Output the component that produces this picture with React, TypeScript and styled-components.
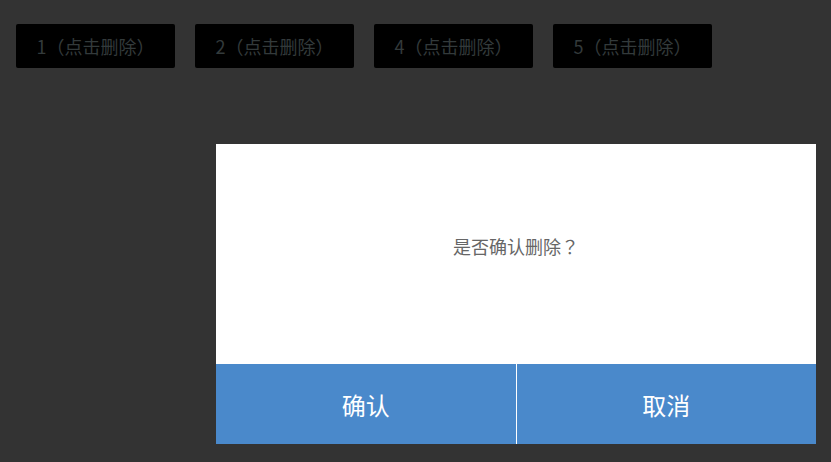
import styled, { createGlobalStyle } from 'styled-components'

const items = [1, 2, 4, 5]

const GlobalStyle = createGlobalStyle`
  html, body {
    margin: 0;
    background: #333333;
    font-family: 'Noto Sans CJK SC', 'Noto Sans', sans-serif;
    text-spacing-trim: space-all;
  }
`

const App = () => {
  return (
    <>
      <GlobalStyle />
      <Page>
        <List>
          {items.map((n) => (
            <DeleteButton key={n}>
              {n}
              <Punct>（</Punct>点击删除<Punct>）</Punct>
            </DeleteButton>
          ))}
        </List>
      </Page>
      <Dialog>
        <DialogBody>
          是否确认删除<Punct>？</Punct>
        </DialogBody>
        <DialogFooter>
          <FooterButton>确认</FooterButton>
          <FooterButton $divider>取消</FooterButton>
        </DialogFooter>
      </Dialog>
    </>
  )
}

export default App

const Page = styled.div`
  width: 100vw;
  height: 100vh;
  box-sizing: border-box;
  padding: 24px 16px;
`

const List = styled.div`
  display: flex;
  gap: 20px;
`

const DeleteButton = styled.button`
  width: 159px;
  height: 44px;
  border: none;
  border-radius: 2px;
  background: #000000;
  color: #333a3b;
  font-family: inherit;
  font-size: 18px;
  text-spacing-trim: space-all;
  padding: 0;
  cursor: pointer;
`

// centred full-width punctuation
const Punct = styled.span`
  font-family: 'Noto Sans CJK TC', 'Noto Sans CJK SC', sans-serif;
`

const Dialog = styled.div`
  position: fixed;
  left: 216px;
  top: 144px;
  width: 600px;
  height: 300px;
  display: flex;
  flex-direction: column;
  background: #ffffff;
`

const DialogBody = styled.div`
  flex: 1;
  display: flex;
  align-items: center;
  justify-content: center;
  padding-bottom: 16px;
  color: #666666;
  font-size: 18px;
`

const DialogFooter = styled.div`
  height: 80px;
  display: flex;
  background: #4a89cb;
`

const FooterButton = styled.button<{ $divider?: boolean }>`
  flex: 1;
  border: none;
  border-left: ${(p) => (p.$divider ? '1px solid #ffffff' : 'none')};
  background: transparent;
  color: #ffffff;
  font-family: inherit;
  font-size: 24px;
  padding: 0;
  cursor: pointer;
`
